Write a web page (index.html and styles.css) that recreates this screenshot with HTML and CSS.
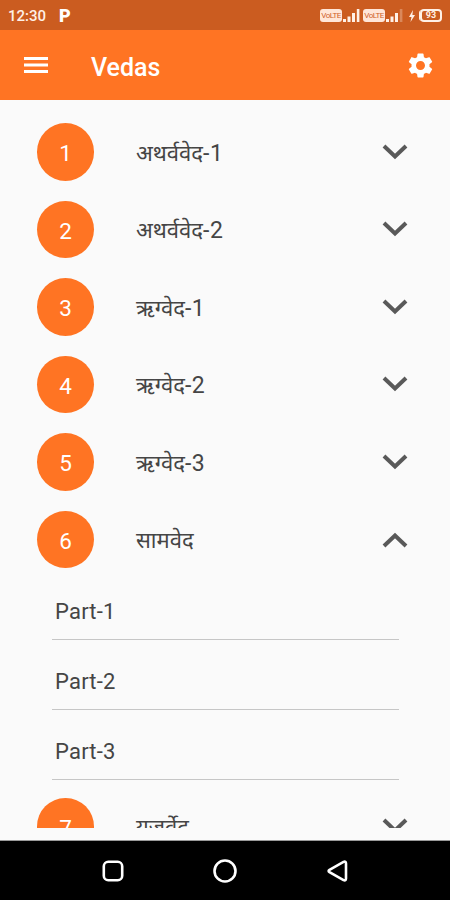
FILE: index.html
```html
<!DOCTYPE html>
<html lang="hi">
<head>
  <meta charset="UTF-8">
  <title>Vedas</title>
  <link rel="stylesheet" href="styles.css">
</head>
<body>
  <svg class="defs">
    <symbol id="chevron" viewBox="0 0 28 18">
      <path d="M3 3l11 10.5L25 3" fill="none" stroke="#595959" stroke-width="4"/>
    </symbol>
    <symbol id="signal" viewBox="0 0 17 13">
      <path d="M0 10h3v3H0zM4.5 7.5h3V13h-3zM9 4h3v9H9z"/>
      <path class="last" d="M13.8 0h2.6v13h-2.6z"/>
    </symbol>
  </svg>

  <div class="status">
    <span class="time">12:30</span>
    <span class="logo">P</span>
    <div class="status-icons">
      <span class="volte">VoLTE</span>
      <svg class="signal"><use href="#signal"/></svg>
      <span class="volte">VoLTE</span>
      <svg class="signal weak"><use href="#signal"/></svg>
      <svg class="bolt" viewBox="0 0 6 12"><path d="M4 0L0 7h2.5L1.5 12 6 5H3.4z"/></svg>
      <span class="battery">93</span>
    </div>
  </div>

  <header>
    <svg class="menu" viewBox="0 0 24 18"><path d="M0 1h24v3H0zM0 7.5h24v3H0zM0 14h24v3H0z"/></svg>
    <h1>Vedas</h1>
    <svg class="gear" viewBox="2 2 20 20"><path d="M19.14 12.94c.04-.3.06-.61.06-.94 0-.32-.02-.64-.07-.94l2.03-1.58c.18-.14.23-.41.12-.61l-1.92-3.32c-.12-.22-.37-.29-.59-.22l-2.39.96c-.5-.38-1.03-.7-1.62-.94l-.36-2.54c-.04-.24-.24-.41-.48-.41h-3.84c-.24 0-.43.17-.47.41l-.36 2.54c-.59.24-1.13.57-1.62.94l-2.39-.96c-.22-.08-.47 0-.59.22L2.74 8.87c-.12.21-.08.47.12.61l2.03 1.58c-.05.3-.09.63-.09.94s.02.64.07.94l-2.03 1.58c-.18.14-.23.41-.12.61l1.92 3.32c.12.22.37.29.59.22l2.39-.96c.5.38 1.03.7 1.62.94l.36 2.54c.05.24.24.41.48.41h3.84c.24 0 .44-.17.47-.41l.36-2.54c.59-.24 1.13-.56 1.62-.94l2.39.96c.22.08.47 0 .59-.22l1.92-3.32c.12-.22.07-.47-.12-.61l-2.01-1.58zM12 15.6c-1.98 0-3.6-1.62-3.6-3.6s1.62-3.6 3.6-3.6 3.6 1.62 3.6 3.6-1.62 3.6-3.6 3.6z"/></svg>
  </header>

  <main>
    <div class="row"><span class="num">1</span><span class="name">अथर्ववेद<span class="vol">-1</span></span><svg class="chevron"><use href="#chevron"/></svg></div>
    <div class="row"><span class="num">2</span><span class="name">अथर्ववेद<span class="vol">-2</span></span><svg class="chevron"><use href="#chevron"/></svg></div>
    <div class="row"><span class="num">3</span><span class="name">ऋग्वेद<span class="vol">-1</span></span><svg class="chevron"><use href="#chevron"/></svg></div>
    <div class="row"><span class="num">4</span><span class="name">ऋग्वेद<span class="vol">-2</span></span><svg class="chevron"><use href="#chevron"/></svg></div>
    <div class="row"><span class="num">5</span><span class="name">ऋग्वेद<span class="vol">-3</span></span><svg class="chevron"><use href="#chevron"/></svg></div>
    <div class="row"><span class="num">6</span><span class="name">सामवेद</span><svg class="chevron up"><use href="#chevron"/></svg></div>
    <ul class="parts">
      <li>Part-1</li>
      <li>Part-2</li>
      <li>Part-3</li>
    </ul>
    <div class="row"><span class="num">7</span><span class="name">यजुर्वेद</span><svg class="chevron"><use href="#chevron"/></svg></div>
  </main>

  <nav>
    <svg viewBox="0 0 26 26"><rect x="3.8" y="3.8" width="18.4" height="18.4" rx="4.5"/></svg>
    <svg viewBox="0 0 26 26"><circle cx="13" cy="13" r="10.5"/></svg>
    <svg viewBox="0 0 26 26"><path d="M4.5 11.8L18.5 3.9q2.5-1 2.5 1.5v15.2q0 2.5-2.5 1.5L4.5 14.2q-1.8-1.2 0-2.4z"/></svg>
  </nav>
</body>
</html>
```

FILE: styles.css
```css
* {
  box-sizing: border-box;
}

body {
  margin: 0;
  height: 900px;
  display: flex;
  flex-direction: column;
  overflow: hidden;
  font-family: Roboto, "Noto Sans", "Noto Sans Devanagari", sans-serif;
  background: #fafafa;
  color: #454545;
}

.defs {
  display: none;
}

/* barra de status */
.status {
  flex: none;
  height: 30px;
  padding: 0 8px 0 8px;
  display: flex;
  align-items: center;
  background: #cb5c20;
  color: #fff0e6;
  fill: #fff0e6;
}

.time {
  width: 51px;
  padding-top: 2px;
  font-size: 15px;
  font-weight: 500;
}

.logo {
  padding-top: 2px;
  font-size: 18px;
  font-weight: 900;
  line-height: 18px;
  color: #fff;
}

.status-icons {
  margin-left: auto;
  padding-top: 1px;
  display: flex;
  align-items: center;
}

.volte {
  width: 22px;
  height: 13px;
  border-radius: 3px;
  background: #ffe6d8;
  color: #d0622b;
  font-size: 8px;
  letter-spacing: -0.5px;
  line-height: 13px;
  text-align: center;
}

.signal {
  width: 17px;
  height: 13px;
  margin: 0 3px 0 1px;
}

.weak {
  margin-right: 6px;
  --last: 0.3;
}

.last {
  opacity: var(--last, 1);
}

.bolt {
  width: 6px;
  height: 12px;
  margin-right: 4px;
}

.battery {
  width: 22px;
  height: 13px;
  margin-left: 1px;
  border: 2px solid #fff0e6;
  border-radius: 4px;
  font-size: 9px;
  font-weight: 700;
  line-height: 9px;
  text-align: center;
  box-shadow: -2px 0 0 -1px #fff0e6;
}

header {
  flex: none;
  height: 70px;
  padding: 0 17px 0 24px;
  display: flex;
  align-items: center;
  background: #ff7423;
  color: #fff;
  fill: #fff;
}

.menu {
  width: 24px;
  height: 18px;
  margin-right: 43px;
}

h1 {
  flex: 1;
  margin: 0;
  padding-top: 4px;
  font-size: 25px;
  font-weight: 500;
}

.gear {
  width: 25px;
  height: 25px;
}

main {
  flex: none;
  height: 728px;
  padding-top: 13.25px;
  overflow: hidden;
}

.row {
  height: 77.5px;
  padding: 0 41px 0 37px;
  display: flex;
  align-items: center;
}

.num {
  width: 57px;
  height: 57.5px;
  margin-right: 42px;
  border-radius: 50%;
  background: #ff7423;
  color: #fff;
  font-size: 22.5px;
  line-height: 60px;
  text-align: center;
}

.name {
  flex: 1;
  padding-top: 3px;
  font-size: 22px;
  line-height: 30px;
}

.vol {
  font-size: 23px;
  letter-spacing: 0.6px;
}

.chevron {
  width: 28px;
  height: 18px;
  margin-top: -1px;
}

.up {
  margin-top: 1px;
  transform: rotate(180deg);
}

.parts {
  list-style: none;
  margin: -8px 51px 7.5px 52px;
  padding: 0;
}

.parts li {
  height: 70px;
  padding: 29px 3px 0;
  border-bottom: 1px solid #c6c6c6;
  font-size: 22px;
  line-height: 26px;
  letter-spacing: 0.2px;
}

nav {
  height: 60px;
  margin-top: auto;
  border-top: 1px solid #9a9a9a;
  padding: 0 56px 0 57px;
  display: flex;
  align-items: center;
  justify-content: space-around;
  background: #000;
}

nav svg {
  width: 26px;
  height: 26px;
  fill: none;
  stroke: #fff;
  stroke-width: 2.6;
}
```
